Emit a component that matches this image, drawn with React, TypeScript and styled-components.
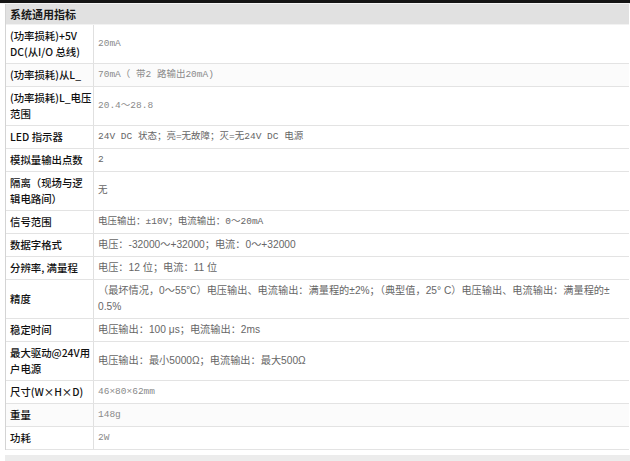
import React from "react";
import styled, { createGlobalStyle } from "styled-components";

const Global = createGlobalStyle`
  html, body { margin: 0; padding: 0; background: #ffffff; }
  body { font-family: "Liberation Sans", "Noto Sans CJK SC", sans-serif; }
`;

const Page = styled.div`
  width: 630px;
  height: 461px;
  overflow: hidden;
  background: #fff;
`;

const TopBar = styled.div`
  height: 3px;
  background: #141414;
  border-bottom: 1px solid #f4f4f4;
`;

const Table = styled.div`
  margin-left: 5px;
  margin-right: 1px;
  border-left: 1px solid #d4d4d4;
`;

const Header = styled.div`
  height: 20px;
  background: #e1e1e1;
  display: flex;
  align-items: center;
  padding-left: 4px;
  font-family: "Noto Sans CJK SC", sans-serif;
  font-weight: 700;
  font-size: 11px;
  color: #1a1a1a;
  border-bottom: 1px solid #f2f2f2;
`;

const Row = styled.div<{ $shade?: boolean }>`
  display: grid;
  grid-template-columns: 88px 1fr;
  border-bottom: 1px solid #e3e3e3;
  background: ${(p) => (p.$shade ? "#fbfbfb" : "#ffffff")};
`;

const Label = styled.div`
  padding: 3px 4px;
  border-right: 1px solid #e0e0e0;
  font-family: "Noto Sans CJK SC", sans-serif;
  font-size: 10.4px;
  font-weight: 500;
  white-space: nowrap;
  overflow: hidden;
  color: #111111;
  display: flex;
  align-items: center;
`;

const LabelText = styled.span<{ $lines: number }>`
  display: block;
  line-height: 16px;
  height: ${(p) => p.$lines * 16}px;
`;

const Value = styled.div<{ $mono?: boolean; $light?: boolean }>`
  padding: 3px 4px;
  font-family: ${(p) =>
    p.$mono
      ? `"Liberation Mono", "Noto Sans CJK SC", monospace`
      : `"Liberation Sans", "Noto Sans CJK SC", sans-serif`};
  font-size: ${(p) => (p.$mono ? "9.5px" : "10.2px")};
  white-space: nowrap;
  overflow: hidden;
  color: ${(p) => (p.$light ? "#8a8a8a" : "#666666")};
  display: flex;
  align-items: center;
`;

const ValueText = styled.span<{ $lines: number }>`
  display: block;
  line-height: 16px;
  height: ${(p) => p.$lines * 16}px;
`;

const Footer = styled.div`
  margin-top: 5px;
  margin-left: 5px;
  height: 12px;
  background: #ececec;
`;

type Spec = {
  label: React.ReactNode;
  value: React.ReactNode;
  labelLines?: number;
  valueLines?: number;
  mono?: boolean;
  light?: boolean;
  shade?: boolean;
};

const specs: Spec[] = [
  { label: <>(功率损耗)+5V<br />DC(从I/O 总线)</>, labelLines: 2, value: "20mA", mono: true, light: true },
  { label: "(功率损耗)从L_", value: "70mA（ 带2 路输出20mA)", mono: true, light: true, shade: true },
  { label: <>(功率损耗)L_电压<br />范围</>, labelLines: 2, value: "20.4～28.8", mono: true, light: true },
  { label: "LED 指示器", value: "24V DC 状态；亮=无故障；灭=无24V DC 电源", mono: true },
  { label: "模拟量输出点数", value: "2", mono: true },
  { label: <>隔离（现场与逻<br />辑电路间）</>, labelLines: 2, value: "无", mono: true },
  { label: "信号范围", value: "电压输出：±10V；电流输出：0～20mA", mono: true },
  { label: "数据字格式", value: "电压：-32000～+32000；电流：0～+32000" },
  { label: "分辨率, 满量程", value: "电压：12 位；电流：11 位" },
  {
    label: "精度",
    valueLines: 2,
    value: <>（最坏情况，0～55℃）电压输出、电流输出：满量程的±2%；（典型值，25° C）电压输出、电流输出：满量程的±<br />0.5%</>,
  },
  { label: "稳定时间", value: "电压输出：100 μs；电流输出：2ms" },
  { label: <>最大驱动@24V用<br />户电源</>, labelLines: 2, value: "电压输出：最小5000Ω；电流输出：最大500Ω" },
  { label: "尺寸(W×H×D)", value: "46×80×62mm", mono: true, light: true },
  { label: "重量", value: "148g", mono: true, light: true, shade: true },
  { label: "功耗", value: "2W", mono: true, light: true },
];

export default function App() {
  return (
    <Page>
      <Global />
      <TopBar />
      <Table>
        <Header>系统通用指标</Header>
        {specs.map((s, i) => (
          <Row key={i} $shade={s.shade}>
            <Label>
              <LabelText $lines={s.labelLines ?? 1}>{s.label}</LabelText>
            </Label>
            <Value $mono={s.mono} $light={s.light}>
              <ValueText $lines={s.valueLines ?? 1}>{s.value}</ValueText>
            </Value>
          </Row>
        ))}
      </Table>
      <Footer />
    </Page>
  );
}
